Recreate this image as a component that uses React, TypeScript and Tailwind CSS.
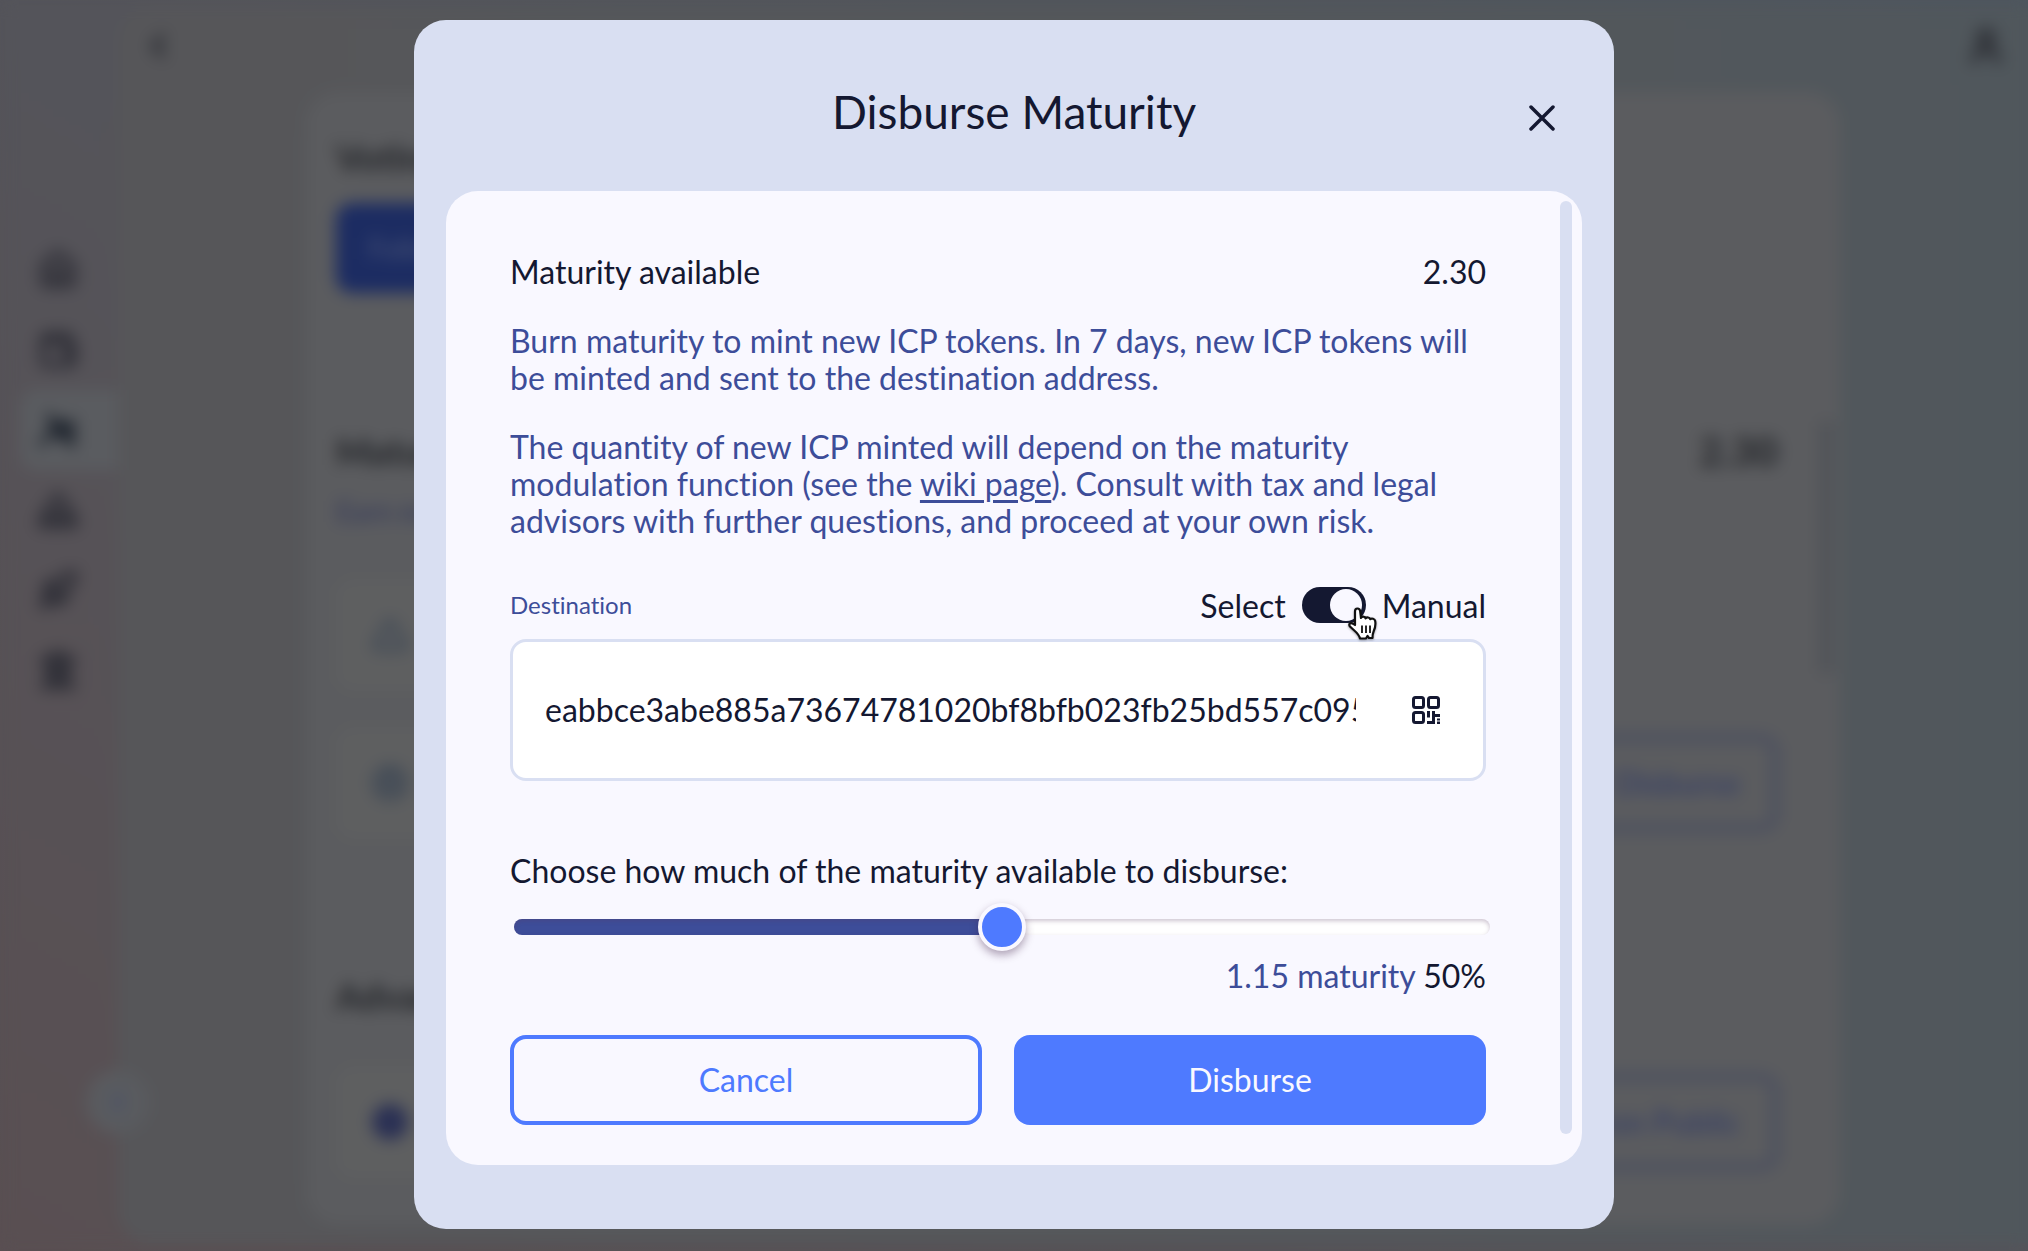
import React, { useState } from "react";
import {
  ChevronLeft,
  ChevronRight,
  CircleUserRound,
  House,
  Landmark,
  Rocket,
  Triangle,
  User,
  Wallet,
} from "lucide-react";

function NeuronsIcon() {
  return (
    <svg viewBox="0 0 40 40" className="size-10" fill="none" stroke="#20262f" strokeWidth="6" strokeLinecap="round">
      <path d="M3 34 16 20 11 5M16 20l18 14V12" />
      <circle cx="22" cy="19" r="7" fill="#20262f" />
    </svg>
  );
}

function VotingIcon() {
  return (
    <svg viewBox="0 0 40 40" className="size-10" fill="none" stroke="currentColor" strokeWidth="6" strokeLinejoin="round">
      <path d="M20 4 30 16 20 26 10 16zM8 20 3 28v8h34v-8l-5-8M4 29h32" />
    </svg>
  );
}

function NavItem({ label, active, children }: { label: string; active?: boolean; children: React.ReactNode }) {
  return (
    <a
      href="#"
      aria-label={label}
      className={
        active
          ? "flex h-20 w-full items-center rounded-l-2xl bg-[#5a5c60] pl-[18px]"
          : "flex h-20 w-full items-center pl-[18px]"
      }
    >
      {children}
    </a>
  );
}

function Sidebar() {
  return (
    <aside className="relative w-[118px] shrink-0 pt-[230px] pl-5 text-[#303038]">
      <nav className="flex flex-col">
        <NavItem label="Portfolio">
          <House className="size-10" strokeWidth={4} />
        </NavItem>
        <NavItem label="Tokens">
          <Wallet className="size-10" strokeWidth={4} />
        </NavItem>
        <NavItem label="Neurons" active>
          <NeuronsIcon />
        </NavItem>
        <NavItem label="Voting">
          <VotingIcon />
        </NavItem>
        <NavItem label="Launchpad">
          <Rocket className="size-10" strokeWidth={4} />
        </NavItem>
        <NavItem label="Canisters">
          <Landmark className="size-10" strokeWidth={4} />
        </NavItem>
      </nav>
      <button
        type="button"
        aria-label="Expand menu"
        className="absolute -right-8 bottom-[117px] z-10 flex size-16 items-center justify-center rounded-full bg-[#595b5f] text-[#454e6c]"
      >
        <ChevronRight className="size-8" strokeWidth={3} />
      </button>
    </aside>
  );
}

function RowTile({ children }: { children: React.ReactNode }) {
  return (
    <div className="flex h-28 w-1/2 items-center rounded-2xl bg-[#5e5f60] pl-9 text-[#414a56]">{children}</div>
  );
}

function Page() {
  return (
    <div className="flex h-screen overflow-hidden bg-linear-to-tr from-[#594f52] via-[#54545a] to-[#4e565e]">
      <Sidebar />
      <main className="my-2 flex flex-1 flex-col rounded-l-[32px] bg-linear-to-r from-[#565659] via-[#54575a] to-[#50575c]">
        <header className="mb-2 flex h-[76px] shrink-0 items-center justify-between px-[22px] text-[#2b2d33]">
          <button type="button" aria-label="Back">
            <ChevronLeft className="size-9" strokeWidth={4} />
          </button>
          <button type="button" aria-label="Account">
            <User className="size-10" strokeWidth={4} />
          </button>
        </header>
        <section className="relative mx-[188px] mb-[18px] flex flex-1 flex-col rounded-[32px] bg-[#5b5c5f] pr-[62px] pl-[30px] text-4xl leading-10 font-black text-[#26282c]">
          <h2 className="mt-[45px]">Voting power</h2>
          <button
            type="button"
            className="mt-[26px] h-[90px] self-start rounded-2xl bg-[#1c2c62] px-8 text-[28px] font-normal text-[#4a5578]"
          >
            Followed neurons
          </button>
          <div className="mt-[138px] flex justify-between">
            <h2>Maturity</h2>
            <span className="text-[40px]">2.30</span>
          </div>
          <a href="#" className="mt-5 text-[28px] font-bold text-[#3a3f5c]">
            Earn maturity
          </a>
          <div className="mt-12 flex">
            <RowTile>
              <Triangle className="size-9" strokeWidth={4} />
            </RowTile>
          </div>
          <div className="mt-9 flex items-center justify-between">
            <RowTile>
              <CircleUserRound className="size-9" strokeWidth={4} />
            </RowTile>
            <button
              type="button"
              className="h-[96px] rounded-2xl border-[6px] border-[#444a5e] px-8 text-[32px] font-bold text-[#3a4264]"
            >
              Disburse
            </button>
          </div>
          <h2 className="mt-[137px]">Advanced</h2>
          <div className="mt-[50px] flex items-center justify-between">
            <RowTile>
              <span className="size-9 rounded-full bg-[#2a3054]" />
            </RowTile>
            <button
              type="button"
              className="h-[96px] rounded-2xl border-[6px] border-[#444a5e] px-8 text-[32px] font-bold text-[#3a4264]"
            >
              Make Neuron Public
            </button>
          </div>
          <span className="absolute top-[328px] right-2 h-[255px] w-3 rounded-full bg-[#4f5257]" />
        </section>
      </main>
    </div>
  );
}

function QrIcon() {
  return (
    <svg viewBox="0 0 28 28" className="size-7" fill="none" stroke="#141831" strokeWidth="3">
      <rect x="1.5" y="1.5" width="10" height="10" rx="2" />
      <rect x="16.5" y="1.5" width="10" height="10" rx="2" />
      <rect x="1.5" y="16.5" width="10" height="10" rx="2" />
      <path d="M16.5 15v6.500M15 26.5h6.500M21.5 15v13M21.5 19.5H28" strokeWidth="3" />
      <path d="M26.5 22.5v2M26.5 25.500v2.500" strokeWidth="3" />
    </svg>
  );
}

function HandPointer() {
  return (
    <svg
      viewBox="0 0 32 36"
      className="pointer-events-none absolute top-5 left-11 h-9 w-8 drop-shadow-[0_1px_1px_rgba(0,0,0,0.35)]"
      aria-hidden="true"
    >
      <path
        d="M9 18V4.500C9 2.500 10 1.500 11.400 1.500S14 2.500 14.200 4.500L15 11c.5-1.800 4-1.800 4.600.4 1-1.500 4-1.200 4.600.8 1.400-1.300 4.600-.6 5 1.800.5 3-.2 7.500-1.600 10.500-.9 2-1.100 4-1.100 6.500h-3.500l-1.500-2-1.600 2.500h-6C13.600 27 8 23.500 4 19.500c-2.200-3 1-4.800 5-1.500z"
        fill="#fff"
        stroke="#111"
        strokeWidth="2.200"
        strokeLinejoin="round"
      />
      <path d="M16 18.500v7.500M20 18.500v7.500M24 18.500v7.500" stroke="#111" strokeWidth="1.800" />
    </svg>
  );
}

function DisburseModal() {
  const [manual, setManual] = useState(true);
  const [address, setAddress] = useState("eabbce3abe885a73674781020bf8bfb023fb25bd557c095");
  const [percent, setPercent] = useState(50);
  const amount = ((2.3 * percent) / 100).toFixed(2);

  return (
    <div
      role="dialog"
      aria-modal="true"
      aria-labelledby="modal-title"
      className="w-full max-w-[1200px] rounded-[32px] bg-[#d9dff2] px-8 pb-16 text-[32px] leading-[37px] text-[#141831] [font-variant-ligatures:none]"
    >
      <header className="grid grid-cols-[1fr_auto_1fr] items-end px-[18px] pt-16 pb-[51px]">
        <h1 id="modal-title" className="col-start-2 text-[46px] leading-14">
          Disburse Maturity
        </h1>
        <button type="button" aria-label="Close" className="flex size-11 items-center justify-center justify-self-end">
          <svg viewBox="0 0 26 26" className="size-[26px]" stroke="#141831" strokeWidth="3.500" strokeLinecap="round">
            <path d="M2 2l22 22M24 2 2 24" />
          </svg>
        </button>
      </header>

      <div className="relative flex flex-col rounded-[32px] bg-[#f9f8ff] pt-[62px] pr-24 pb-10 pl-16">
        <div className="flex justify-between">
          <span>Maturity available</span>
          <span>2.30</span>
        </div>
        <p className="mt-8 text-[#3d4d99]">
          Burn maturity to mint new ICP tokens. In 7 days, new ICP tokens will be minted and sent to the destination
          address.
        </p>
        <p className="mt-8 text-[#3d4d99]">
          The quantity of new ICP minted will depend on the maturity modulation function (see the{" "}
          <a href="#" className="underline decoration-[3px] underline-offset-4">
            wiki page
          </a>
          ). Consult with tax and legal advisors with further questions, and proceed at your own risk.
        </p>

        <div className="mt-[46px] flex h-10 items-center justify-between">
          <label htmlFor="address" className="text-2xl text-[#3d4d99]">
            Destination
          </label>
          <div className="flex items-center gap-4">
            <label htmlFor="mode">Select</label>
            <span className="relative flex">
              <input
                id="mode"
                type="checkbox"
                role="switch"
                checked={manual}
                onChange={(e) => setManual(e.target.checked)}
                className="h-9 w-16 cursor-pointer appearance-none rounded-full bg-[#141831] p-0.5 before:block before:size-8 before:rounded-full before:bg-[#f9f8ff] checked:before:ml-[26px]"
              />
              <HandPointer />
            </span>
            <label htmlFor="mode">Manual</label>
          </div>
        </div>

        <div className="mt-3.5 flex h-[142px] items-center rounded-2xl border-[3px] border-[#d9dff2] bg-white pr-[43px] pl-8">
          <input
            id="address"
            type="text"
            value={address}
            onChange={(e) => setAddress(e.target.value)}
            className="h-12 min-w-0 flex-1 bg-transparent pb-0.5 outline-none"
          />
          <button type="button" aria-label="Scan QR code" className="ml-14">
            <QrIcon />
          </button>
        </div>

        <label htmlFor="percentage" className="mt-[71px]">
          Choose how much of the maturity available to disburse:
        </label>
        <input
          id="percentage"
          type="range"
          min={0}
          max={100}
          value={percent}
          onChange={(e) => setPercent(Number(e.target.value))}
          style={{ backgroundImage: `linear-gradient(90deg, #3d4d99 ${percent}%, #ffffff ${percent}%)` }}
          className="mx-1 mt-[30px] block h-4 w-full cursor-pointer appearance-none rounded-full shadow-[inset_0_2px_4px_rgba(90,60,100,0.3)] [&::-webkit-slider-runnable-track]:h-4 [&::-webkit-slider-thumb]:-mt-4 [&::-webkit-slider-thumb]:size-12 [&::-webkit-slider-thumb]:appearance-none [&::-webkit-slider-thumb]:rounded-full [&::-webkit-slider-thumb]:border-4 [&::-webkit-slider-thumb]:border-[#f9f8ff] [&::-webkit-slider-thumb]:bg-[#4e7aff] [&::-webkit-slider-thumb]:shadow-[0_4px_8px_rgba(60,30,70,0.4)]"
        />
        <p className="mt-[22px] text-right">
          <span className="text-[#3d4d99]">{amount} maturity</span> {percent}%
        </p>

        <div className="mt-[41px] grid grid-cols-2 gap-8">
          <button type="button" className="h-[90px] rounded-2xl border-4 border-[#4e7aff] pb-0.5 text-[#4e7aff]">
            Cancel
          </button>
          <button type="button" className="h-[90px] rounded-2xl bg-[#4e7aff] pb-0.5 text-[#f9f8ff]">
            Disburse
          </button>
        </div>
        <span className="absolute top-2.5 right-2.5 bottom-[31px] w-3 rounded-full bg-[#d9dff2]" />
      </div>
    </div>
  );
}

export default function App() {
  return (
    <div className="font-['Lato',sans-serif]">
      <Page />
      <div className="fixed inset-0 z-20 flex items-center justify-center pb-0.5 backdrop-blur-[8px]">
        <DisburseModal />
      </div>
    </div>
  );
}
